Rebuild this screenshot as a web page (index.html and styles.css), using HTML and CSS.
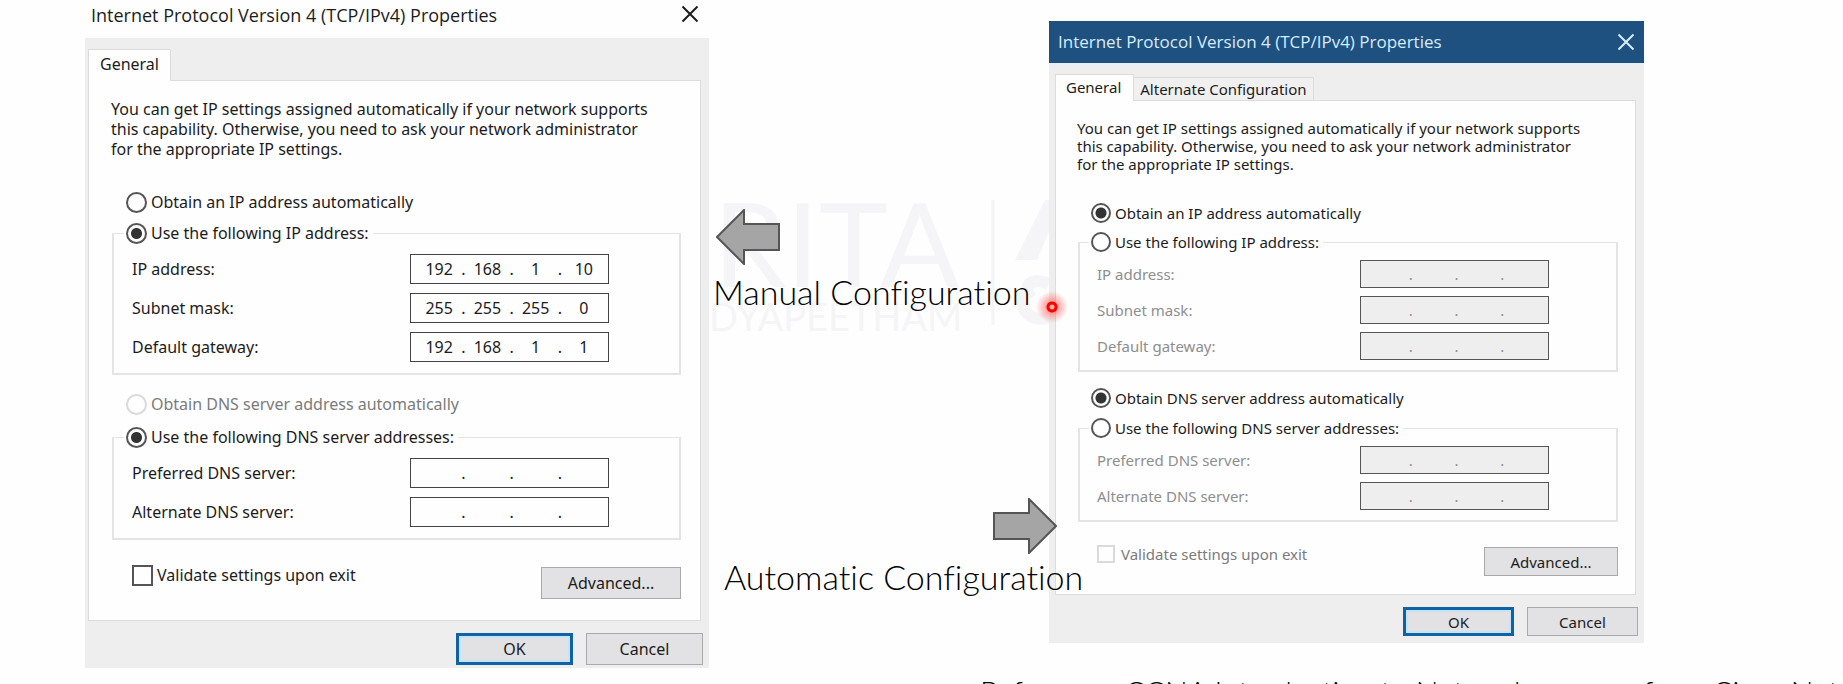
FILE: index.html
```html
<!DOCTYPE html>
<html lang="en">
<head>
<meta charset="utf-8">
<title>IPv4 configuration</title>
<link rel="stylesheet" href="styles.css">
</head>
<body>
<main class="slide">
  <section class="dialog dialog-manual">
    <header class="titlebar">
      <h2 class="title">Internet Protocol Version 4 (TCP/IPv4) Properties</h2>
      <button class="close" type="button" aria-label="Close"><svg viewBox="0 0 18 18"><path d="M1.5 1.5l15 15M16.5 1.5l-15 15"/></svg></button>
    </header>
    <form class="body">
      <div class="tabs"><button class="tab active" type="button">General</button></div>
      <div class="panel">
        <p class="intro">You can get IP settings assigned automatically if your network supports<br>this capability. Otherwise, you need to ask your network administrator<br>for the appropriate IP settings.</p>
        <label class="choice"><input type="radio" name="ip">Obtain an IP address automatically</label>
        <fieldset class="group">
          <legend><label class="option"><input type="radio" name="ip" checked>Use the following IP address:</label></legend>
          <div class="row"><label for="m-ip">IP address:</label><div class="ip"><input id="m-ip" value="192"><span>.</span><input aria-label="Octet 2" value="168"><span>.</span><input aria-label="Octet 3" value="1"><span>.</span><input aria-label="Octet 4" value="10"></div></div>
          <div class="row"><label for="m-mask">Subnet mask:</label><div class="ip"><input id="m-mask" value="255"><span>.</span><input aria-label="Octet 2" value="255"><span>.</span><input aria-label="Octet 3" value="255"><span>.</span><input aria-label="Octet 4" value="0"></div></div>
          <div class="row"><label for="m-gw">Default gateway:</label><div class="ip"><input id="m-gw" value="192"><span>.</span><input aria-label="Octet 2" value="168"><span>.</span><input aria-label="Octet 3" value="1"><span>.</span><input aria-label="Octet 4" value="1"></div></div>
        </fieldset>
        <label class="choice choice-dns muted"><input type="radio" name="dns" disabled>Obtain DNS server address automatically</label>
        <fieldset class="group group-dns">
          <legend><label class="option"><input type="radio" name="dns" checked>Use the following DNS server addresses:</label></legend>
          <div class="row"><label for="m-d1">Preferred DNS server:</label><div class="ip"><input id="m-d1"><span>.</span><input aria-label="Octet 2"><span>.</span><input aria-label="Octet 3"><span>.</span><input aria-label="Octet 4"></div></div>
          <div class="row"><label for="m-d2">Alternate DNS server:</label><div class="ip"><input id="m-d2"><span>.</span><input aria-label="Octet 2"><span>.</span><input aria-label="Octet 3"><span>.</span><input aria-label="Octet 4"></div></div>
        </fieldset>
        <div class="extras">
          <label class="check"><input type="checkbox">Validate settings upon exit</label>
          <button class="btn advanced" type="button">Advanced...</button>
        </div>
      </div>
      <div class="actions"><button class="btn ok" type="button">OK</button><button class="btn" type="button">Cancel</button></div>
    </form>
  </section>

  <section class="notes">
    <div class="watermark" aria-hidden="true">
      <div class="mark-words"><span class="mark-name">RITA</span><span class="mark-sub">DYAPEETHAM</span></div>
      <svg class="mark-logo" viewBox="0 0 60 130"><path d="M4 0v125" stroke-width="3"/><path class="solid" d="M26 60L56 0h4v32L48 60z"/><path d="M60 84c-18-8-27 2-18 14M60 118c-20 4-30-8-24-24" stroke-width="12"/></svg>
    </div>
    <svg class="arrow" viewBox="0 0 64 56"><path d="M1 28L28 1v14h35v26H28v14z"/></svg>
    <p class="caption">Manual Configuration</p>
    <svg class="arrow arrow-right" viewBox="0 0 64 56"><path d="M63 28L36 1v14H1v26h35v14z"/></svg>
    <p class="caption caption-auto">Automatic Configuration</p>
    <i class="laser"></i>
  </section>

  <section class="dialog dialog-auto">
    <header class="titlebar">
      <h2 class="title">Internet Protocol Version 4 (TCP/IPv4) Properties</h2>
      <button class="close" type="button" aria-label="Close"><svg viewBox="0 0 18 18"><path d="M1.5 1.5l15 15M16.5 1.5l-15 15"/></svg></button>
    </header>
    <form class="body">
      <div class="tabs"><button class="tab active" type="button">General</button><button class="tab" type="button">Alternate Configuration</button></div>
      <div class="panel">
        <p class="intro">You can get IP settings assigned automatically if your network supports<br>this capability. Otherwise, you need to ask your network administrator<br>for the appropriate IP settings.</p>
        <label class="choice"><input type="radio" name="ip" checked>Obtain an IP address automatically</label>
        <fieldset class="group">
          <legend><label class="option"><input type="radio" name="ip">Use the following IP address:</label></legend>
          <div class="row"><label for="a-ip">IP address:</label><div class="ip"><input id="a-ip" disabled><span>.</span><input aria-label="Octet 2" disabled><span>.</span><input aria-label="Octet 3" disabled><span>.</span><input aria-label="Octet 4" disabled></div></div>
          <div class="row"><label for="a-mask">Subnet mask:</label><div class="ip"><input id="a-mask" disabled><span>.</span><input aria-label="Octet 2" disabled><span>.</span><input aria-label="Octet 3" disabled><span>.</span><input aria-label="Octet 4" disabled></div></div>
          <div class="row"><label for="a-gw">Default gateway:</label><div class="ip"><input id="a-gw" disabled><span>.</span><input aria-label="Octet 2" disabled><span>.</span><input aria-label="Octet 3" disabled><span>.</span><input aria-label="Octet 4" disabled></div></div>
        </fieldset>
        <label class="choice choice-dns"><input type="radio" name="dns" checked>Obtain DNS server address automatically</label>
        <fieldset class="group group-dns">
          <legend><label class="option"><input type="radio" name="dns">Use the following DNS server addresses:</label></legend>
          <div class="row"><label for="a-d1">Preferred DNS server:</label><div class="ip"><input id="a-d1" disabled><span>.</span><input aria-label="Octet 2" disabled><span>.</span><input aria-label="Octet 3" disabled><span>.</span><input aria-label="Octet 4" disabled></div></div>
          <div class="row"><label for="a-d2">Alternate DNS server:</label><div class="ip"><input id="a-d2" disabled><span>.</span><input aria-label="Octet 2" disabled><span>.</span><input aria-label="Octet 3" disabled><span>.</span><input aria-label="Octet 4" disabled></div></div>
        </fieldset>
        <div class="extras">
          <label class="check muted"><input type="checkbox" disabled>Validate settings upon exit</label>
          <button class="btn advanced" type="button">Advanced...</button>
        </div>
      </div>
      <div class="actions"><button class="btn ok" type="button">OK</button><button class="btn" type="button">Cancel</button></div>
    </form>
  </section>
</main>
<footer class="reference">Reference: CCNA Introduction to Networks course from Cisco Networking</footer>
</body>
</html>
```
FILE: styles.css
```css
* { box-sizing: border-box; }

body {
  margin: 0;
  height: 100vh;
  overflow: hidden;
  background: #fefefe;
  color: #1c1c1c;
  font-family: "Noto Sans", "Open Sans", sans-serif;
}

.slide {
  display: grid;
  grid-template-columns: minmax(0, 624fr) minmax(0, 340fr) minmax(0, 595fr);
  align-items: start;
  padding: 0 10.8% 0 85px;
}

/* Dialogs */
.dialog {
  --text: 16px;
  --line: 20px;
  --radio: 21px;
  --item: 22px;
  --field-w: 199px;
  --field-h: 30px;
  --btn-w: 117px;
  --btn-h: 32px;
  position: relative;
  z-index: 1;
  font-size: var(--text);
  line-height: var(--line);
  background: #eee;
  white-space: nowrap;
}
.dialog-auto {
  --text: 15px;
  --line: 18px;
  --radio: 20px;
  --item: 20px;
  --field-w: 189px;
  --field-h: 28px;
  --btn-w: 111px;
  --btn-h: 29px;
  margin-top: 21px;
  z-index: 0;
}

.titlebar {
  display: flex;
  justify-content: space-between;
  align-items: flex-start;
  height: 38px;
  padding: 5px 10px 0 6px;
  background: #fefefe;
}
.title {
  margin: 0;
  font-family: "Open Sans", sans-serif;
  font-size: 18px;
  line-height: 20px;
  font-weight: 400;
}
.close {
  width: 18px;
  height: 18px;
  padding: 0;
  border: 0;
  background: none;
}
.close svg { display: block; fill: none; stroke: #1c1c1c; stroke-width: 2; }
.dialog-auto .titlebar {
  align-items: center;
  height: 44px;
  padding: 0 9px;
  border-bottom: 2px solid #e3f0f9;
  background: #1e5180;
}
.dialog-auto .title { font-size: 17px; color: #d6ecfb; }
.dialog-auto .close svg { stroke: #d6ecfb; }

.body { padding: 11px 8px 3px 3px; }
.dialog-auto .body { padding: 9px 8px 7px 6px; }

.tabs { display: flex; align-items: flex-end; margin-bottom: -1px; }
.tab {
  height: 24px;
  padding: 0 6px;
  border: 1px solid #dcdcdc;
  border-left: 0;
  background: #f1f0f1;
  color: inherit;
  font: inherit;
}
.tab.active {
  position: relative;
  height: 32px;
  padding: 0 11px 4px;
  border: 1px solid #dcdcdc;
  border-bottom: 0;
  background: #fefefe;
}
.dialog-auto .tab.active { height: 27px; padding: 0 12px 3px 10px; }

.panel {
  padding: 18px 19px 21px 22px;
  border: 1px solid #dcdcdc;
  background: #fefefe;
}
.dialog-auto .panel { padding: 18px 17px 18px 21px; }

.intro { margin: 0; }

.choice, .option, .check {
  display: flex;
  align-items: center;
  gap: 4px;
  height: var(--item);
}
.choice { margin: 32px 0 9px; padding-left: 15px; }
.choice-dns { margin: 18px 0 11px; }
.dialog-auto .choice { margin: 30px 0 9px; padding-left: 14px; }
.dialog-auto .choice-dns { margin: 16px 0 10px; }
.muted { color: #7b7b7b; }

input[type="radio"], input[type="checkbox"] {
  appearance: none;
  flex: none;
  width: var(--radio);
  height: var(--radio);
  margin: 0;
  border: 2px solid #555;
  background: #fefefe;
}
input[type="radio"] { border-radius: 50%; }
input[type="radio"]:checked {
  background: radial-gradient(circle, #333 0 5px, #fefefe 6px);
}
input[type="checkbox"]:disabled, input[type="radio"]:disabled { border-color: #dadada; }
.dialog-auto input[type="checkbox"] { width: 18px; height: 18px; }
.dialog-auto .check { gap: 6px; }

.group {
  margin: 0 0 0 1px;
  padding: 10px 70px 11px 10px;
  border: 2px solid #e4e4e6;
  border-top-width: 1px;
  min-width: 0;
}
.dialog-auto .group { padding: 8px 67px 10px 9px; }
.group legend { padding: 0 4px 0 2px; }
.row {
  display: flex;
  justify-content: space-between;
  align-items: center;
  height: var(--field-h);
  padding-left: 8px;
}
.row + .row { margin-top: 9px; }
.dialog-auto .row + .row { margin-top: 8px; }
.dialog-auto .row { color: #8e8e8e; }

.ip {
  display: grid;
  grid-template-columns: 1fr 4px 1fr 4px 1fr 4px 1fr;
  align-items: center;
  width: var(--field-w);
  height: var(--field-h);
  padding: 0 2px 0 6px;
  border: 1px solid #444;
  background: #fefefe;
}
.dialog-auto .ip { border-color: #555; background: #eee; }
.ip input {
  width: 100%;
  min-width: 0;
  padding: 0;
  border: 0;
  background: none;
  color: inherit;
  font: inherit;
  text-align: center;
}

.extras {
  display: flex;
  justify-content: space-between;
  align-items: flex-start;
  margin-top: 24px;
  padding-left: 21px;
}
.dialog-auto .extras { margin-top: 22px; padding-left: 20px; }
.btn {
  width: var(--btn-w);
  height: var(--btn-h);
  padding: 0;
  border: 1px solid #a9a9a9;
  background: #e2e1e3;
  color: inherit;
  font: inherit;
}
.advanced { width: 140px; margin-top: 3px; }
.dialog-auto .advanced { width: 134px; }
.ok {
  border: 3px solid #0f62a4;
  box-shadow: inset 0 0 0 2px #c5e4f8;
}
.actions { display: flex; justify-content: flex-end; gap: 13px; margin-right: -2px; padding-top: 12px; }

/* Captions between the dialogs */
.notes {
  position: relative;
  z-index: 2;
  display: flex;
  flex-direction: column;
  align-items: flex-start;
  padding: 209px 0 0 4px;
}
.arrow {
  position: relative;
  width: 64px;
  height: 56px;
  margin-left: 3px;
  fill: #a5a5a5;
  stroke: #555;
  stroke-width: 2;
}
.arrow-right { align-self: flex-end; margin: 185px -8px 0 0; }
.caption {
  position: relative;
  margin: 6px 0 0;
  color: #000;
  font: 300 34px/42px Lato, sans-serif;
  font-variant-ligatures: none;
  white-space: nowrap;
}
.caption-auto { margin: 2px 0 0 11px; }

.watermark {
  position: absolute;
  inset: 186px 0 auto 0;
  display: flex;
  justify-content: space-between;
  overflow: hidden;
  color: #f5f5f7;
  font-family: Lato, sans-serif;
}
.mark-words { display: flex; flex-direction: column; }
.mark-name { margin-left: 4px; font-size: 117px; line-height: 112px; }
.mark-sub { font-size: 38px; line-height: 36px; }
.mark-logo {
  flex: none;
  width: 60px;
  height: 130px;
  margin-top: 14px;
  fill: none;
  stroke: #f5f5f7;
}
.mark-logo .solid { fill: #f5f5f7; stroke: none; }

.laser {
  position: absolute;
  top: 291px;
  right: -19px;
  width: 32px;
  height: 32px;
  border-radius: 50%;
  background: radial-gradient(circle, #ffb0a0 0 2px, #f00 3px 5px, rgba(255, 60, 60, .45) 6px, rgba(255, 60, 60, 0) 16px);
}

.reference {
  margin-top: 5px;
  padding-left: 980px;
  overflow: hidden;
  color: #000;
  font: 300 30px/36px Lato, sans-serif;
  font-variant-ligatures: none;
  white-space: nowrap;
}
```
